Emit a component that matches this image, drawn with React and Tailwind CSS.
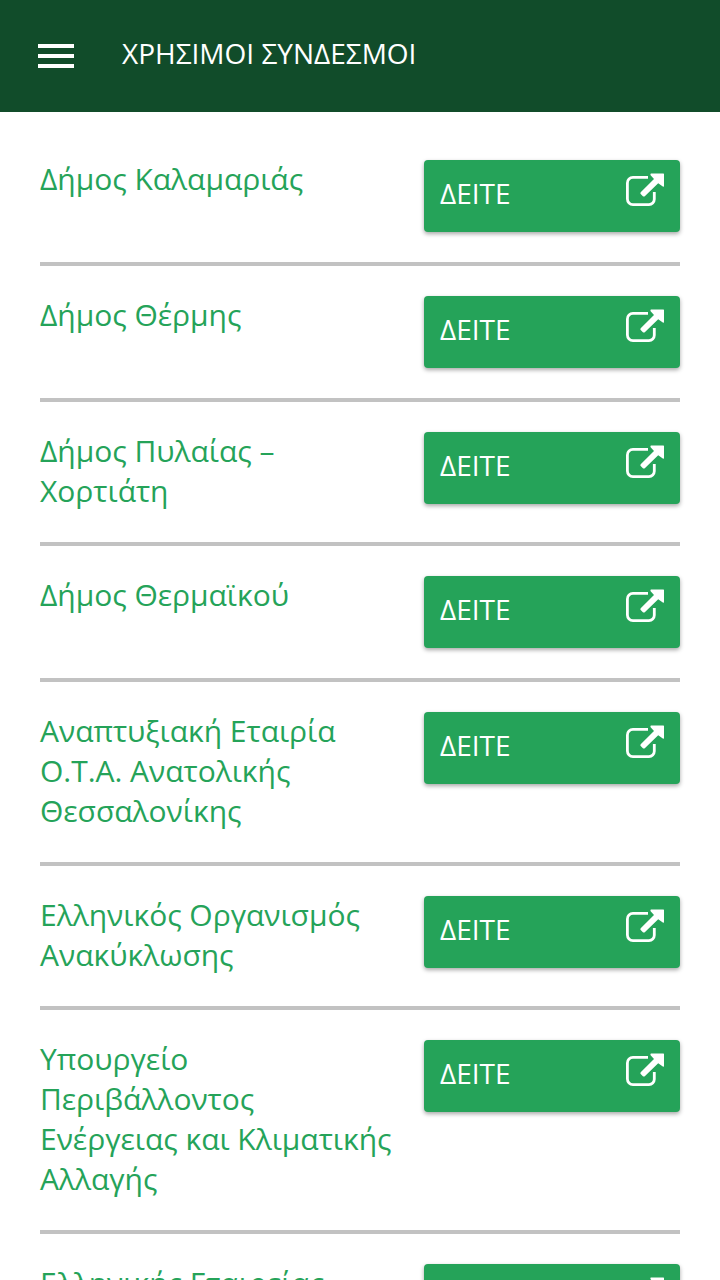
const links = [
  'Δήμος Καλαμαριάς',
  'Δήμος Θέρμης',
  'Δήμος Πυλαίας – Χορτιάτη',
  'Δήμος Θερμαϊκού',
  'Αναπτυξιακή Εταιρία Ο.Τ.Α. Ανατολικής Θεσσαλονίκης',
  'Ελληνικός Οργανισμός Ανακύκλωσης',
  'Υπουργείο Περιβάλλοντος Ενέργειας και Κλιματικής Αλλαγής',
  'Ελληνικής Εταιρείας',
];

function OpenIcon() {
  return (
    <svg width="40" height="36" viewBox="0 0 40 36" fill="none" className="-mr-0.5 mt-0.5">
      <path
        d="M22 4.4H6.9A5.5 5.5 0 0 0 1.4 9.9V26.1A5.5 5.5 0 0 0 6.9 31.6H23A5.3 5.3 0 0 0 28.3 26.3V19"
        stroke="white"
        strokeWidth="2.8"
      />
      <path
        d="M25 0.4H37.4Q38 0.4 38 1V13Q38 14.2 36.8 13.6L32.2 10.2L18.8 23.2Q17.8 24 16.9 23.2L14.7 21Q13.9 20.1 14.7 19.2L28 6L24.6 2.2Q24 0.4 25 0.4Z"
        fill="white"
      />
    </svg>
  );
}

function Header() {
  return (
    <header className="flex h-28 items-center bg-[#114c2a] pl-[38px] text-white">
      <button className="flex flex-col gap-1.5" aria-label="Menu">
        <span className="h-1 w-9 bg-white" />
        <span className="h-1 w-9 bg-white" />
        <span className="h-1 w-9 bg-white" />
      </button>
      <h1 className="mb-1.5 ml-12 text-[28px] leading-10">ΧΡΗΣΙΜΟΙ ΣΥΝΔΕΣΜΟΙ</h1>
    </header>
  );
}

function LinkRow({ title }) {
  return (
    <li className="mb-[30px] flex items-start justify-between border-b-4 border-[#c2c2c2] pb-[30px]">
      <p className="-mt-px mb-px w-[356px] text-[30px] leading-10 tracking-[-0.03px] text-[#25a359]">{title}</p>
      <button className="flex h-[72px] w-64 items-start justify-between rounded-sm bg-[#25a359] px-4 pt-[11px] text-[28px] leading-[44px] text-white shadow-[0_2px_4px_rgba(0,0,0,0.35)]">
        <span>ΔΕΙΤΕ</span>
        <OpenIcon />
      </button>
    </li>
  );
}

export default function App() {
  return (
    <div className="h-screen overflow-hidden bg-white font-['Open_Sans','Noto_Sans',sans-serif]">
      <Header />
      <ul className="px-10 pt-12">
        {links.map((title) => (
          <LinkRow key={title} title={title} />
        ))}
      </ul>
    </div>
  );
}
